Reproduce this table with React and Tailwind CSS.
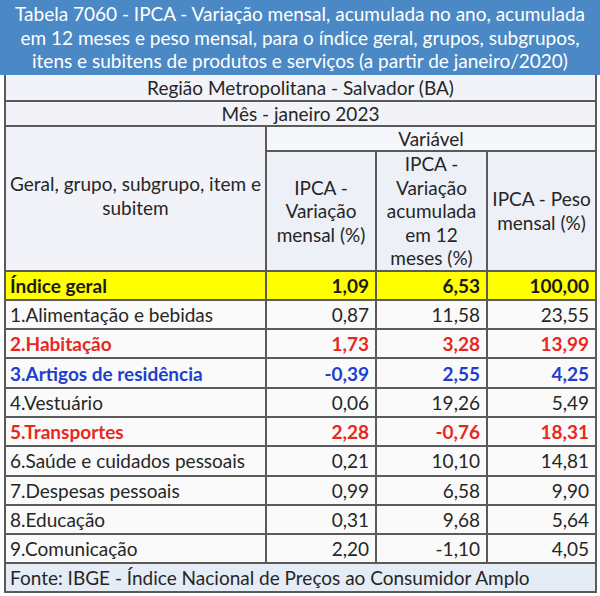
import React from 'react';

const rows = [
  { name: 'Índice geral', v: ['1,09', '6,53', '100,00'], kind: 'geral' },
  { name: '1.Alimentação e bebidas', v: ['0,87', '11,58', '23,55'] },
  { name: '2.Habitação', v: ['1,73', '3,28', '13,99'], kind: 'red' },
  { name: '3.Artigos de residência', v: ['-0,39', '2,55', '4,25'], kind: 'blue' },
  { name: '4.Vestuário', v: ['0,06', '19,26', '5,49'] },
  { name: '5.Transportes', v: ['2,28', '-0,76', '18,31'], kind: 'red' },
  { name: '6.Saúde e cuidados pessoais', v: ['0,21', '10,10', '14,81'] },
  { name: '7.Despesas pessoais', v: ['0,99', '6,58', '9,90'] },
  { name: '8.Educação', v: ['0,31', '9,68', '5,64'] },
  { name: '9.Comunicação', v: ['2,20', '-1,10', '4,05'] },
];

const rowStyle = {
  geral: 'bg-[#ffff00] text-[#1a1a1a] font-bold',
  red: 'bg-[#fafafa] text-[#e8281e] font-bold',
  blue: 'bg-[#fafafa] text-[#1d3fcf] font-bold',
};

export default function App() {
  return (
    <div className="w-[600px] h-[596px] bg-white font-['Lato','Liberation_Sans',sans-serif] text-[#262626]">
      <div className="bg-[#4a89c5] text-white text-center text-[19px] leading-[23.5px] pt-[2px] h-[75px] px-1">
        Tabela 7060 - IPCA - Variação mensal, acumulada no ano, acumulada em 12 meses e peso mensal, para o índice geral, grupos, subgrupos, itens e subitens de produtos e serviços (a partir de janeiro/2020)
      </div>
      <table className="ml-[4px] w-[591px] border-collapse table-fixed text-[19px]">
        <colgroup>
          <col className="w-[261px]" />
          <col className="w-[110px]" />
          <col className="w-[111px]" />
          <col className="w-[109px]" />
        </colgroup>
        <tbody>
          <tr className="h-[26px] bg-[#f1f3f9]">
            <td colSpan={4} className="border-2 border-t-0 border-[#5a5a5a] text-center leading-none">Região Metropolitana - Salvador (BA)</td>
          </tr>
          <tr className="h-[25px] bg-[#f1f3f9]">
            <td colSpan={4} className="border-2 border-[#5a5a5a] text-center leading-none">Mês - janeiro 2023</td>
          </tr>
          <tr className="h-[25px] bg-[#f6f7fb]">
            <td rowSpan={2} className="border-2 border-[#5a5a5a] text-center leading-[24px] px-1 pb-1 bg-[#f1f3f9]">Geral, grupo, subgrupo, item e subitem</td>
            <td colSpan={3} className="border-2 border-[#5a5a5a] text-center leading-none">Variável</td>
          </tr>
          <tr className="h-[114px] bg-[#eef0f7] text-center leading-[23.5px]">
            <td className="border-2 border-[#5a5a5a] px-1">IPCA - Variação mensal (%)</td>
            <td className="border-2 border-[#5a5a5a] px-1">IPCA - Variação acumulada em 12 meses (%)</td>
            <td className="border-2 border-[#5a5a5a] px-1">IPCA - Peso mensal (%)</td>
          </tr>
          {rows.map((r) => (
            <tr key={r.name} className={`h-[29.3px] ${rowStyle[r.kind] || 'bg-[#fafafa]'}`}>
              <td className="border-2 border-[#5a5a5a] pl-[4px] leading-none whitespace-nowrap">{r.name}</td>
              {r.v.map((x, i) => (
                <td key={i} className="border-2 border-[#5a5a5a] text-right pr-[6px] leading-none">{x}</td>
              ))}
            </tr>
          ))}
          <tr className="h-[29px] bg-[#e6ecf6]">
            <td colSpan={4} className="border-2 border-[#5a5a5a] pl-[4px] leading-none">Fonte: IBGE - Índice Nacional de Preços ao Consumidor Amplo</td>
          </tr>
        </tbody>
      </table>
    </div>
  );
}
